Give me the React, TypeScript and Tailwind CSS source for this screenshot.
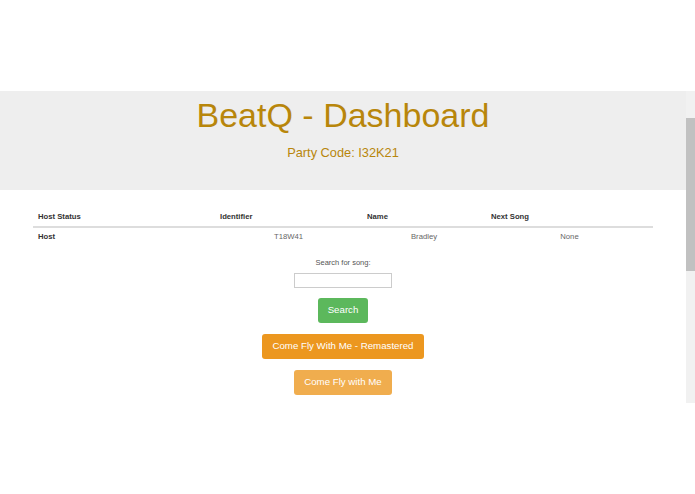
const players = [
  { status: "Host", id: "T18W41", name: "Bradley", next: "None" },
];

const results = [
  { title: "Come Fly With Me - Remastered", tone: "bg-[#ec971f]" },
  { title: "Come Fly with Me", tone: "bg-[#f0ad4e]" },
];

export default function App() {
  return (
    <div className="w-[695px] h-[494px] bg-white flex flex-col font-['Liberation_Sans',Arial,sans-serif] overflow-hidden">
      <div className="h-[91px] shrink-0" />

      {/* Page viewport with scrollbar */}
      <div className="flex h-[312px] shrink-0">
        <main className="flex-1 flex flex-col overflow-hidden">
          {/* Header */}
          <header className="h-[99px] shrink-0 bg-[#eeeeee] flex flex-col items-center pt-[5px]">
            <h1 className="text-[34px] leading-[39px] text-[#b8860b]">BeatQ - Dashboard</h1>
            <p className="mt-[10px] text-[12.8px] leading-[15px] text-[#b8860b]">Party Code: I32K21</p>
          </header>

          {/* Players table */}
          <section className="mx-[33px] mt-[22px] text-[7.7px] leading-[9px]">
            <div className="grid grid-cols-[182px_147px_124px_1fr] pb-[5px] border-b-2 border-[#dddddd] font-bold text-[#333333]">
              <span className="pl-[5px]">Host Status</span>
              <span className="pl-[5px]">Identifier</span>
              <span className="pl-[5px]">Name</span>
              <span className="pl-[5px]">Next Song</span>
            </div>
            {players.map((p) => (
              <div key={p.id} className="grid grid-cols-[182px_147px_124px_1fr] pt-[4px] text-[#666666]">
                <span className="pl-[5px] font-bold text-[#333333]">{p.status}</span>
                <span className="text-center">{p.id}</span>
                <span className="text-center">{p.name}</span>
                <span className="text-center">{p.next}</span>
              </div>
            ))}
          </section>

          {/* Search */}
          <section className="flex flex-col items-center mt-[17px]">
            <label className="text-[7.5px] leading-[9px] text-[#555555]">Search for song:</label>
            <input className="mt-[6px] w-[98px] h-[15px] border border-[#cccccc] bg-white outline-none" />
            <button className="mt-[10px] h-[25px] px-[10px] rounded-[3px] bg-[#5cb85c] text-white text-[9.7px]">
              Search
            </button>
            {results.map((r) => (
              <button
                key={r.title}
                className={`mt-[11px] h-[25px] px-[10px] rounded-[3px] text-white text-[9.7px] ${r.tone}`}
              >
                {r.title}
              </button>
            ))}
          </section>
        </main>

        {/* Scrollbar */}
        <div className="w-[9px] shrink-0 bg-[#f1f1f1] pt-[27px]">
          <div className="h-[153px] bg-[#c1c1c1]" />
        </div>
      </div>
    </div>
  );
}
